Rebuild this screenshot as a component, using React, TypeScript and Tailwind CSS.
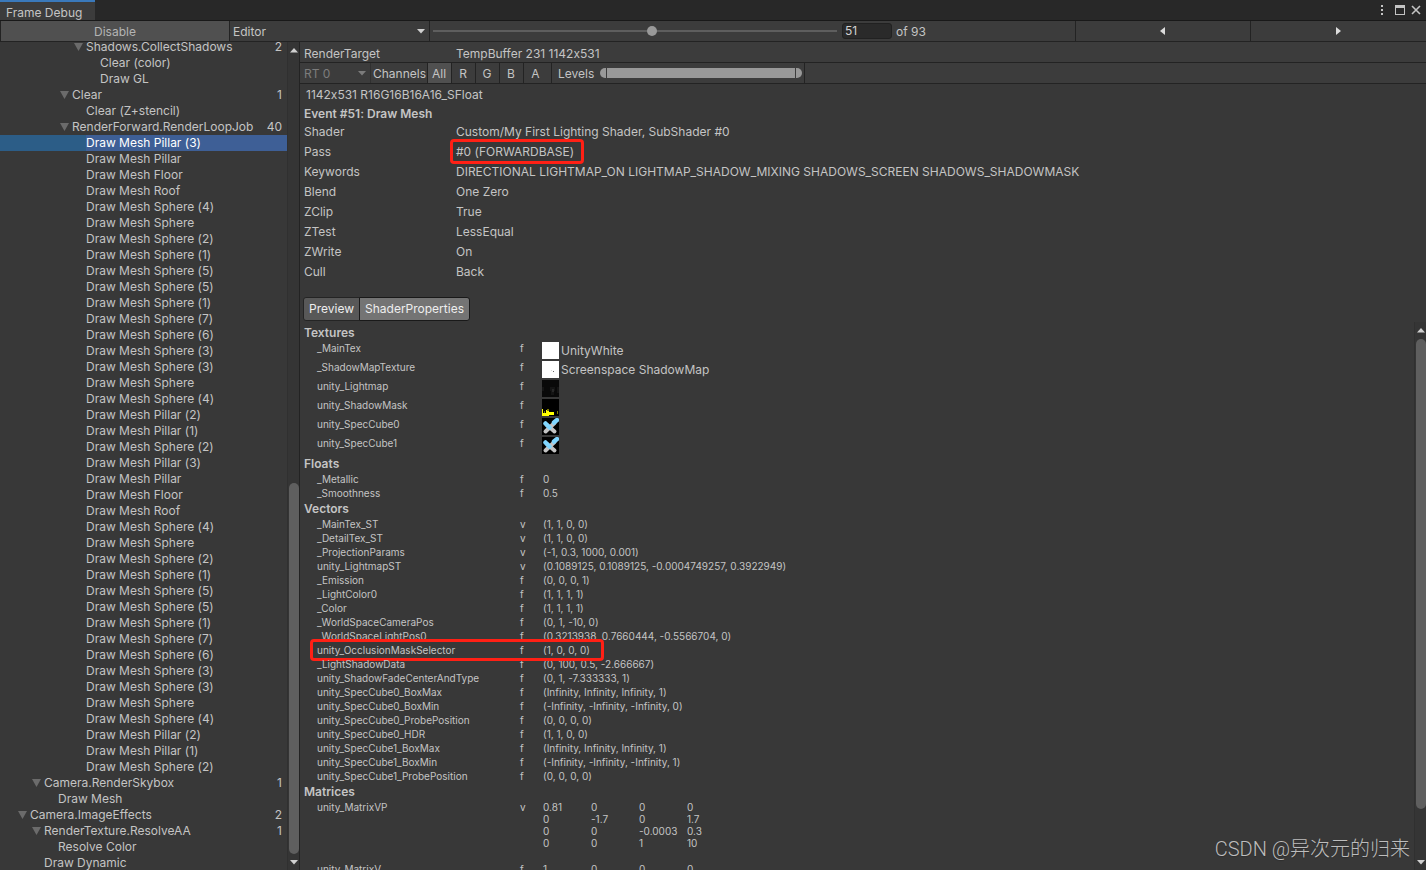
import type { ReactNode } from 'react'
import clsx from 'clsx'

type TreeItem = {
  label: string
  depth: number
  count?: number
  selected?: boolean
}

const meshes = [
  'Pillar (3)',
  'Pillar',
  'Floor',
  'Roof',
  'Sphere (4)',
  'Sphere',
  'Sphere (2)',
  'Sphere (1)',
  'Sphere (5)',
  'Sphere (5)',
  'Sphere (1)',
  'Sphere (7)',
  'Sphere (6)',
  'Sphere (3)',
  'Sphere (3)',
  'Sphere',
  'Sphere (4)',
  'Pillar (2)',
  'Pillar (1)',
  'Sphere (2)',
]

// both lighting passes draw the same list of meshes
const drawCalls: TreeItem[] = [...meshes, ...meshes].map((mesh, index) => ({
  label: `Draw Mesh ${mesh}`,
  depth: 5,
  selected: index === 0,
}))

const treeItems: TreeItem[] = [
  { label: 'Shadows.CollectShadows', depth: 5, count: 2 },
  { label: 'Clear (color)', depth: 6 },
  { label: 'Draw GL', depth: 6 },
  { label: 'Clear', depth: 4, count: 1 },
  { label: 'Clear (Z+stencil)', depth: 5 },
  { label: 'RenderForward.RenderLoopJob', depth: 4, count: 40 },
  ...drawCalls,
  { label: 'Camera.RenderSkybox', depth: 2, count: 1 },
  { label: 'Draw Mesh', depth: 3 },
  { label: 'Camera.ImageEffects', depth: 1, count: 2 },
  { label: 'RenderTexture.ResolveAA', depth: 2, count: 1 },
  { label: 'Resolve Color', depth: 3 },
  { label: 'Draw Dynamic', depth: 2 },
]

const indents = ['w-4', 'w-[30px]', 'w-11', 'w-[58px]', 'w-18', 'w-[86px]', 'w-25']

const eventInfo = [
  { name: 'Shader', value: 'Custom/My First Lighting Shader, SubShader #0' },
  { name: 'Pass', value: '#0 (FORWARDBASE)', marked: true },
  {
    name: 'Keywords',
    value:
      'DIRECTIONAL LIGHTMAP_ON LIGHTMAP_SHADOW_MIXING SHADOWS_SCREEN SHADOWS_SHADOWMASK',
  },
  { name: 'Blend', value: 'One Zero' },
  { name: 'ZClip', value: 'True' },
  { name: 'ZTest', value: 'LessEqual' },
  { name: 'ZWrite', value: 'On' },
  { name: 'Cull', value: 'Back' },
]

const textures = [
  { name: '_MainTex', thumb: 'white', value: 'UnityWhite' },
  { name: '_ShadowMapTexture', thumb: 'shadow', value: 'Screenspace ShadowMap' },
  { name: 'unity_Lightmap', thumb: 'lightmap', value: '' },
  { name: 'unity_ShadowMask', thumb: 'mask', value: '' },
  { name: 'unity_SpecCube0', thumb: 'cube', value: '' },
  { name: 'unity_SpecCube1', thumb: 'cube', value: '' },
]

const floats = [
  { name: '_Metallic', stage: 'f', value: '0' },
  { name: '_Smoothness', stage: 'f', value: '0.5' },
]

const vectors = [
  { name: '_MainTex_ST', stage: 'v', value: '(1, 1, 0, 0)' },
  { name: '_DetailTex_ST', stage: 'v', value: '(1, 1, 0, 0)' },
  { name: '_ProjectionParams', stage: 'v', value: '(-1, 0.3, 1000, 0.001)' },
  {
    name: 'unity_LightmapST',
    stage: 'v',
    value: '(0.1089125, 0.1089125, -0.0004749257, 0.3922949)',
  },
  { name: '_Emission', stage: 'f', value: '(0, 0, 0, 1)' },
  { name: '_LightColor0', stage: 'f', value: '(1, 1, 1, 1)' },
  { name: '_Color', stage: 'f', value: '(1, 1, 1, 1)' },
  { name: '_WorldSpaceCameraPos', stage: 'f', value: '(0, 1, -10, 0)' },
  {
    name: '_WorldSpaceLightPos0',
    stage: 'f',
    value: '(0.3213938, 0.7660444, -0.5566704, 0)',
  },
  {
    name: 'unity_OcclusionMaskSelector',
    stage: 'f',
    value: '(1, 0, 0, 0)',
    marked: true,
  },
  { name: '_LightShadowData', stage: 'f', value: '(0, 100, 0.5, -2.666667)' },
  { name: 'unity_ShadowFadeCenterAndType', stage: 'f', value: '(0, 1, -7.333333, 1)' },
  {
    name: 'unity_SpecCube0_BoxMax',
    stage: 'f',
    value: '(Infinity, Infinity, Infinity, 1)',
  },
  {
    name: 'unity_SpecCube0_BoxMin',
    stage: 'f',
    value: '(-Infinity, -Infinity, -Infinity, 0)',
  },
  { name: 'unity_SpecCube0_ProbePosition', stage: 'f', value: '(0, 0, 0, 0)' },
  { name: 'unity_SpecCube0_HDR', stage: 'f', value: '(1, 1, 0, 0)' },
  {
    name: 'unity_SpecCube1_BoxMax',
    stage: 'f',
    value: '(Infinity, Infinity, Infinity, 1)',
  },
  {
    name: 'unity_SpecCube1_BoxMin',
    stage: 'f',
    value: '(-Infinity, -Infinity, -Infinity, 1)',
  },
  { name: 'unity_SpecCube1_ProbePosition', stage: 'f', value: '(0, 0, 0, 0)' },
]

const matrices = [
  {
    name: 'unity_MatrixVP',
    stage: 'v',
    values: [
      '0.81', '0', '0', '0',
      '0', '-1.7', '0', '1.7',
      '0', '0', '-0.0003', '0.3',
      '0', '0', '1', '10',
    ],
  },
  {
    name: 'unity_MatrixV',
    stage: 'f',
    values: ['1', '0', '0', '0'],
  },
]

const thumbs: Record<string, ReactNode> = {
  white: (
    <svg viewBox="0 0 17 17" className="size-[17px]">
      <path d="M0 0h17v17H0z" fill="#fff" />
    </svg>
  ),
  shadow: (
    <svg viewBox="0 0 17 17" className="size-[17px]">
      <path d="M0 0h17v17H0z" fill="#fff" />
      <path d="M9 9h1v1H9z" fill="#ddd" />
      <path d="M11 10h1v1h-1z" fill="#666" />
    </svg>
  ),
  lightmap: (
    <svg viewBox="0 0 17 17" className="size-[17px]">
      <path d="M0 0h17v17H0z" fill="#090909" />
      <path d="M0 7h2v4H0zM8 7h5v4h-1v4H9v-4H8zM15 7h2v6h-2z" fill="#141414" />
      <path d="M10 9h2v3h-2z" fill="#272727" />
    </svg>
  ),
  mask: (
    <svg viewBox="0 0 17 17" className="size-[17px]">
      <path d="M0 0h17v17H0z" fill="#000" />
      <path d="M0 10h1v4h3v-3h2v1h1v1h5v3H7v1H0z" fill="#ff0" />
      <path d="M5 10h2v2H5zM2 12h1v2H2zM15 12h1v3h-1z" fill="#770" />
    </svg>
  ),
  cube: (
    <svg viewBox="0 0 17 17" className="size-[17px]">
      <path d="M0 0h17v17H0z" fill="#000" />
      <path
        d="M3.500 13.500l9-8.500M5 7l7.500 6.500"
        stroke="#c3c3c3"
        strokeWidth="4"
        strokeLinecap="round"
      />
      <path d="M3.500 5.500l4 4M12 4.500L15 2" stroke="#80d6ff" strokeWidth="4.500" strokeLinecap="round" />
    </svg>
  ),
}

const paths = {
  down: 'M0 0h8L4 4.500z',
  up: 'M0 4.500h8L4 0z',
}

const Arrow = ({ dir, className }: { dir: 'down' | 'up'; className?: string }) => (
  <svg viewBox="0 0 8 5" className={clsx('h-[5px] w-2 shrink-0', className)} fill="currentColor">
    <path d={paths[dir]} />
  </svg>
)

const ScrollBar = ({ children }: { children: ReactNode }) => (
  <div className="flex w-3 shrink-0 flex-col items-center border-l border-[#303030] bg-[#353535] text-[#d0d0d0]">
    {children}
  </div>
)

const TreeRow = ({ label, depth, count, selected }: TreeItem) => (
  <li
    className={clsx(
      'flex h-4 items-center leading-4',
      selected && 'bg-[#3e5f96] text-white',
    )}
  >
    <span
      className={clsx(
        'flex h-4 shrink-0 items-center justify-end pr-[3px] text-[#6b6b6b]',
        indents[depth],
        selected && 'bg-[#2c5d87]',
      )}
    >
      {count !== undefined && (
        <svg viewBox="0 0 9 8" className="h-2 w-[9px]" fill="currentColor">
          <path d="M0 0h9L4.500 8z" />
        </svg>
      )}
    </span>
    <span className="flex-1 whitespace-nowrap">{label}</span>
    {count !== undefined && <span className="pr-[5px]">{count}</span>}
  </li>
)

const Section = ({ title, children }: { title: string; children: ReactNode }) => (
  <section>
    <h3 className="h-[17px] pl-1 font-semibold leading-[17px]">{title}</h3>
    <table className="w-full table-fixed text-left text-[10px]">
      <colgroup>
        <col className="w-[220px]" />
        <col className="w-[22px]" />
        <col />
      </colgroup>
      <tbody>{children}</tbody>
    </table>
  </section>
)

const PropertyRow = ({
  name,
  stage,
  value,
  marked,
}: {
  name: string
  stage: string
  value: string
  marked?: boolean
}) => (
  <tr className="h-3.5 leading-[14px]">
    <th scope="row" className="relative p-0 pl-[17px] font-normal">
      {name}
      {marked && (
        <span className="absolute -top-1 left-2.5 h-[22px] w-[294px] rounded-sm border-3 border-[#ff2015]" />
      )}
    </th>
    <td className="p-0">{stage}</td>
    <td className="p-0 pl-px">{value}</td>
  </tr>
)

const TitleBar = () => (
  <header className="flex h-[21px] shrink-0 items-stretch justify-between border-b border-[#191919] bg-[#282828]">
    <div className="w-[95px] border-t-2 border-[#3a79bb] bg-[#3c3c3c] pl-1.5 leading-[21px]">
      Frame Debug
    </div>
    <div className="flex items-center gap-1 pr-[5px]">
      <button type="button" aria-label="Menu" className="flex w-[18px] justify-center">
        <svg viewBox="0 0 2 10" className="h-2.5 w-0.5" fill="#c4c4c4">
          <path d="M0 0h2v2H0zM0 4h2v2H0zM0 8h2v2H0z" />
        </svg>
      </button>
      <button type="button" aria-label="Maximize">
        <svg viewBox="0 0 10 10" className="size-2.5" fill="#c4c4c4">
          <path d="M0 0h10v10H0zM1 3v6h8V3z" fillRule="evenodd" />
        </svg>
      </button>
      <button type="button" aria-label="Close" className="pl-0.5">
        <svg viewBox="0 0 10 10" className="size-2.5" stroke="#c4c4c4" strokeWidth="1.600">
          <path d="M1 1l8 8M9 1L1 9" />
        </svg>
      </button>
    </div>
  </header>
)

const Toolbar = () => (
  <div className="flex h-[21px] shrink-0 items-stretch border-b border-[#232323] bg-[#3c3c3c]">
    <button
      type="button"
      className="w-[230px] border-x border-[#232323] bg-[#505050] pt-px text-[#b4b4b4]"
    >
      Disable
    </button>
    <div className="relative flex w-[200px] items-center border-r border-[#232323]">
      <select
        aria-label="Connection"
        className="h-full w-full appearance-none bg-transparent pl-[3px] pt-px outline-none"
      >
        <option>Editor</option>
      </select>
      <Arrow dir="down" className="pointer-events-none absolute right-1 text-[#d0d0d0]" />
    </div>
    <input
      type="range"
      aria-label="Event"
      min={1}
      max={93}
      defaultValue={51}
      className="ml-[3px] w-[404px] appearance-none bg-transparent [&::-webkit-slider-runnable-track]:h-0.5 [&::-webkit-slider-runnable-track]:bg-[#5e5e5e] [&::-webkit-slider-thumb]:-mt-1 [&::-webkit-slider-thumb]:size-2.5 [&::-webkit-slider-thumb]:appearance-none [&::-webkit-slider-thumb]:rounded-full [&::-webkit-slider-thumb]:bg-[#999999]"
    />
    <div className="flex items-center pl-[5px]">
      <input
        type="text"
        aria-label="Event number"
        defaultValue="51"
        className="h-4 w-[50px] rounded-[3px] border border-[#212121] bg-[#2a2a2a] px-0.5 text-[#d2d2d2] outline-none"
      />
      <span className="pl-1 pt-px">of 93</span>
    </div>
    <div className="flex-1" />
    <button
      type="button"
      aria-label="Previous event"
      className="flex w-[175px] items-center justify-center border-l border-[#232323] pr-0.5"
    >
      <svg viewBox="0 0 5 8" className="h-2 w-[5px]" fill="#dcdcdc">
        <path d="M5 0v8L0 4z" />
      </svg>
    </button>
    <button
      type="button"
      aria-label="Next event"
      className="flex w-44 items-center justify-center border-l border-[#232323]"
    >
      <svg viewBox="0 0 5 8" className="h-2 w-[5px]" fill="#dcdcdc">
        <path d="M0 0v8l5-4z" />
      </svg>
    </button>
  </div>
)

const levelThumb =
  'pointer-events-none absolute inset-0 w-full appearance-none bg-transparent [&::-webkit-slider-thumb]:h-2.5 [&::-webkit-slider-thumb]:w-1.5 [&::-webkit-slider-thumb]:appearance-none [&::-webkit-slider-thumb]:bg-[#999999]'

const ChannelBar = () => (
  <div className="flex h-[21px] items-stretch border-b border-[#232323] bg-[#3c3c3c]">
    <div className="relative flex w-[71px] items-center border-r border-[#303030] text-[#7c7c7c]">
      <select
        aria-label="Render target"
        disabled
        className="h-full w-full appearance-none bg-transparent pl-1 pt-px"
      >
        <option>RT 0</option>
      </select>
      <Arrow dir="down" className="pointer-events-none absolute right-1" />
    </div>
    <span className="w-[57px] border-r border-[#232323] pl-0.5 leading-[21px]">Channels</span>
    {['All', 'R', 'G', 'B', 'A'].map((channel) => (
      <button
        key={channel}
        type="button"
        className={clsx(
          'border-r border-[#232323] pt-px',
          channel === 'A' ? 'w-7 pr-1' : 'w-6 pr-px',
          channel === 'All' && 'bg-[#505050]',
        )}
      >
        {channel}
      </button>
    ))}
    <div className="flex items-center gap-1 border-r border-[#232323] pl-1.5 pr-0.5">
      <span className="w-[38px] pt-px">Levels</span>
      <div className="relative h-2.5 w-[202px]">
        <div className="mx-[7px] h-full bg-[#999999]" />
        <input
          type="range"
          aria-label="Black level"
          defaultValue={0}
          className={clsx(levelThumb, '[&::-webkit-slider-thumb]:rounded-l-full')}
        />
        <input
          type="range"
          aria-label="White level"
          defaultValue={100}
          className={clsx(levelThumb, '[&::-webkit-slider-thumb]:rounded-r-full')}
        />
      </div>
    </div>
  </div>
)

const EventInfo = () => (
  <table className="w-full table-fixed text-left">
    <colgroup>
      <col className="w-39" />
      <col />
    </colgroup>
    <tbody>
      {eventInfo.map(({ name, value, marked }) => (
        <tr key={name} className="h-5 leading-5">
          <th scope="row" className="p-0 pl-1 font-normal">
            {name}
          </th>
          <td className="p-0">
            <span className="relative">
              {value}
              {marked && (
                <span className="absolute -inset-y-[5px] -left-1.5 -right-2.5 rounded-sm border-3 border-[#ff2015]" />
              )}
            </span>
          </td>
        </tr>
      ))}
    </tbody>
  </table>
)

const ShaderProperties = () => (
  <div className="min-w-0 flex-1 overflow-hidden pt-0.5">
    <Section title="Textures">
      {textures.map(({ name, thumb, value }) => (
        <tr key={name} className="h-[19px] align-top leading-[14px]">
          <th scope="row" className="p-0 pl-[17px] font-normal">
            {name}
          </th>
          <td className="p-0">f</td>
          <td className="p-0 pt-px">
            <div className="flex items-center gap-0.5 text-xs leading-[17px]">
              {thumbs[thumb]}
              {value}
            </div>
          </td>
        </tr>
      ))}
    </Section>
    <Section title="Floats">
      {floats.map((row) => (
        <PropertyRow key={row.name} {...row} />
      ))}
    </Section>
    <Section title="Vectors">
      {vectors.map((row) => (
        <PropertyRow key={row.name} {...row} />
      ))}
    </Section>
    <Section title="Matrices">
      {matrices.map(({ name, stage, values }) => (
        <tr key={name} className="h-[62px] align-top leading-[14px]">
          <th scope="row" className="p-0 pl-[17px] font-normal">
            {name}
          </th>
          <td className="p-0">{stage}</td>
          <td className="p-0 pl-px pt-px">
            <div className="grid w-48 grid-cols-4 leading-3">
              {values.map((value, index) => (
                <span key={index}>{value}</span>
              ))}
            </div>
          </td>
        </tr>
      ))}
    </Section>
  </div>
)

export default function App() {
  return (
    <div className="relative flex h-screen flex-col overflow-hidden bg-[#383838] font-[Inter,'Noto_Sans_CJK_SC',sans-serif] text-xs text-[#c4c4c4] [font-feature-settings:'calt'_0]">
      <TitleBar />
      <Toolbar />

      <div className="flex min-h-0 flex-1">
        <nav aria-label="Draw events" className="flex w-[300px] shrink-0 border-r border-[#232323]">
          <div className="min-w-0 flex-1 overflow-hidden">
            <ul className="-mt-[3px]">
              {treeItems.map((item, index) => (
                <TreeRow key={index} {...item} />
              ))}
            </ul>
          </div>
          <ScrollBar>
            <Arrow dir="up" className="mt-1.5" />
            <div className="flex-1" />
            <div className="h-[371px] w-2.5 rounded-full bg-[#5f5f5f]" />
            <Arrow dir="down" className="mb-[5px] mt-1.5" />
          </ScrollBar>
        </nav>

        <main className="flex min-w-0 flex-1 flex-col">
          <div className="flex h-[21px] shrink-0 border-b border-[#232323] bg-[#3c3c3c] pl-1 leading-6">
            <span className="w-38">RenderTarget</span>
            <span>TempBuffer 231 1142x531</span>
          </div>
          <ChannelBar />
          <p className="pl-1.5 leading-[22px]">1142x531 R16G16B16A16_SFloat</p>
          <h2 className="pl-1 font-semibold leading-4">Event #51: Draw Mesh</h2>
          <EventInfo />

          <div className="mb-px mt-[15px] flex pl-[3px]">
            <button
              type="button"
              className="h-6 rounded-l-[3px] border border-[#242424] bg-[#585858] px-[5px] text-[#eeeeee]"
            >
              Preview
            </button>
            <button
              type="button"
              className="-ml-px h-6 rounded-r-[3px] border border-[#191919] bg-[#747474] px-[5px] text-[#eeeeee]"
            >
              ShaderProperties
            </button>
          </div>

          <div className="flex min-h-0 flex-1">
            <ShaderProperties />
            <ScrollBar>
              <Arrow dir="up" className="mt-1.5" />
              <div className="mt-1.5 h-[470px] w-2.5 rounded-full bg-[#5f5f5f]" />
              <div className="flex-1" />
              <Arrow dir="down" className="mb-[5px]" />
            </ScrollBar>
          </div>
        </main>
      </div>

      <p className="absolute bottom-[7px] right-4 text-xl leading-7 text-[#bdbdbd] font-[Roboto,'Noto_Sans_CJK_SC',sans-serif] font-light text-shadow-xs">
        CSDN @异次元的归来
      </p>
    </div>
  )
}
